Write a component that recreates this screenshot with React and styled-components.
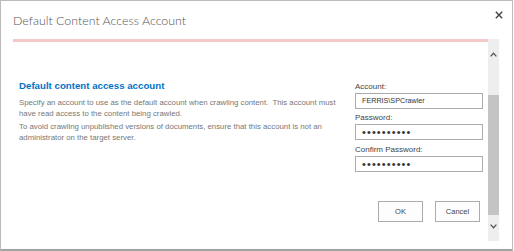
import React from "react";
import styled, { createGlobalStyle } from "styled-components";

const GlobalStyle = createGlobalStyle`
	body {
		margin: 0;
		background: #ffffff;
		font-family: "Liberation Sans", Arial, sans-serif;
	}
`;

const App = () => {
	return (
		<>
			<GlobalStyle />
			<StDialog>
				<StHeader>
					<StTitle>Default Content Access Account</StTitle>
					<StClose aria-label="Close">
						<svg width="8" height="8" viewBox="0 0 8 8">
							<path
								d="M0.8 0.8 L7.2 7.2 M7.2 0.8 L0.8 7.2"
								stroke="#444"
								strokeWidth="1.4"
								fill="none"
							/>
						</svg>
					</StClose>
				</StHeader>
				<StBody>
					<StContent>
						<StSection>
							<StInfo>
								<StHeading>Default content access account</StHeading>
								<StParagraph>
									Specify an account to use as the default account when
									crawling content.&nbsp; This account must
									<br />
									have read access to the content being crawled.
								</StParagraph>
								<StParagraph>
									To avoid crawling unpublished versions of documents, ensure
									that this account is not an
									<br />
									administrator on the target server.
								</StParagraph>
							</StInfo>
							<StForm>
								<StLabel>Account:</StLabel>
								<StInput type="text" defaultValue="FERRIS\SPCrawler" readOnly />
								<StLabel>Password:</StLabel>
								<StInput type="password" defaultValue="aaaaaaaaaa" readOnly />
								<StLabel>Confirm Password:</StLabel>
								<StInput type="password" defaultValue="aaaaaaaaaa" readOnly />
								<StButtons>
									<StButton>OK</StButton>
									<StButton>Cancel</StButton>
								</StButtons>
							</StForm>
						</StSection>
					</StContent>
					<StScrollbar>
						<StArrow $pad={13}>
							<svg width="7" height="5" viewBox="0 0 7 5">
								<path d="M0.6 4.4 L3.5 1.2 L6.4 4.4" stroke="#555" strokeWidth="1.3" fill="none" />
							</svg>
						</StArrow>
						<StThumb />
						<StArrow $pad={9} $grow>
							<svg width="7" height="5" viewBox="0 0 7 5">
								<path d="M0.6 0.6 L3.5 3.8 L6.4 0.6" stroke="#555" strokeWidth="1.3" fill="none" />
							</svg>
						</StArrow>
					</StScrollbar>
				</StBody>
			</StDialog>
		</>
	);
};

export default App;

const StDialog = styled.div`
	width: 513px;
	height: 251px;
	box-sizing: border-box;
	border: 1px solid #bcbcbc;
	border-bottom: 2px solid #a2a2a2;
	background: #ffffff;
	display: flex;
	flex-direction: column;
`;

const StHeader = styled.div`
	display: flex;
	align-items: flex-start;
	height: 38px;
	padding-left: 12px;
	box-sizing: border-box;
`;

const StTitle = styled.div`
	margin-top: 12px;
	font-family: "Lato", "Liberation Sans", sans-serif;
	font-weight: 300;
	font-size: 12.4px;
	line-height: 16px;
	color: #555555;
`;

const StClose = styled.div`
	margin-left: auto;
	margin-right: 9px;
	margin-top: 10px;
	width: 8px;
	height: 8px;
	display: flex;
`;

const StBody = styled.div`
	display: flex;
	margin-left: 12px;
	width: 486px;
	height: 202px;
`;

const StContent = styled.div`
	flex: 1;
	border-top: 3px solid #f5c9c9;
	padding: 37px 5px 0 6px;
`;

const StSection = styled.div`
	display: grid;
	grid-template-columns: 1fr 128px;
	column-gap: 14px;
`;

const StInfo = styled.div`
	display: flex;
	flex-direction: column;
`;

const StHeading = styled.div`
	font-weight: 700;
	font-size: 9.7px;
	line-height: 14px;
	color: #0072c6;
	margin-bottom: 5px;
	white-space: nowrap;
`;

const StParagraph = styled.p`
	margin: 0 0 3px;
	font-size: 7.8px;
	line-height: 10.5px;
	color: #777777;
	white-space: nowrap;
`;

const StForm = styled.div`
	display: flex;
	flex-direction: column;
	padding-top: 1.5px;
`;

const StLabel = styled.label`
	font-size: 8px;
	line-height: 12px;
	color: #444444;
	input + & {
		margin-top: 3.5px;
	}
`;

const StInput = styled.input`
	box-sizing: border-box;
	width: 100%;
	height: 16px;
	margin: 0;
	border: 1px solid #ababab;
	padding: 0 6px;
	font-family: "Liberation Sans", Arial, sans-serif;
	font-size: ${(p) => (p.type === "password" ? "11px" : "7.2px")};
	letter-spacing: ${(p) => (p.type === "password" ? "1.1px" : "0")};
	color: #333333;
	background: #ffffff;
	outline: none;
`;

const StButtons = styled.div`
	display: flex;
	justify-content: flex-end;
	gap: 12px;
	margin-top: 29.5px;
	padding-right: 3px;
`;

const StButton = styled.button`
	width: 45px;
	height: 21px;
	box-sizing: border-box;
	border: 1px solid #ababab;
	background: #fdfdfd;
	font-family: "Liberation Sans", Arial, sans-serif;
	font-size: 7.5px;
	color: #444444;
	padding: 0;
`;

const StScrollbar = styled.div`
	width: 11px;
	display: flex;
	flex-direction: column;
	background: #eeeeee;
`;

const StArrow = styled.div`
	display: flex;
	justify-content: center;
	align-items: flex-start;
	padding-top: ${(p) => p.$pad}px;
	height: ${(p) => (p.$grow ? "auto" : "56px")};
	flex: ${(p) => (p.$grow ? "1" : "none")};
	box-sizing: border-box;
`;

const StThumb = styled.div`
	height: 120px;
	background: #c4c4c4;
`;
